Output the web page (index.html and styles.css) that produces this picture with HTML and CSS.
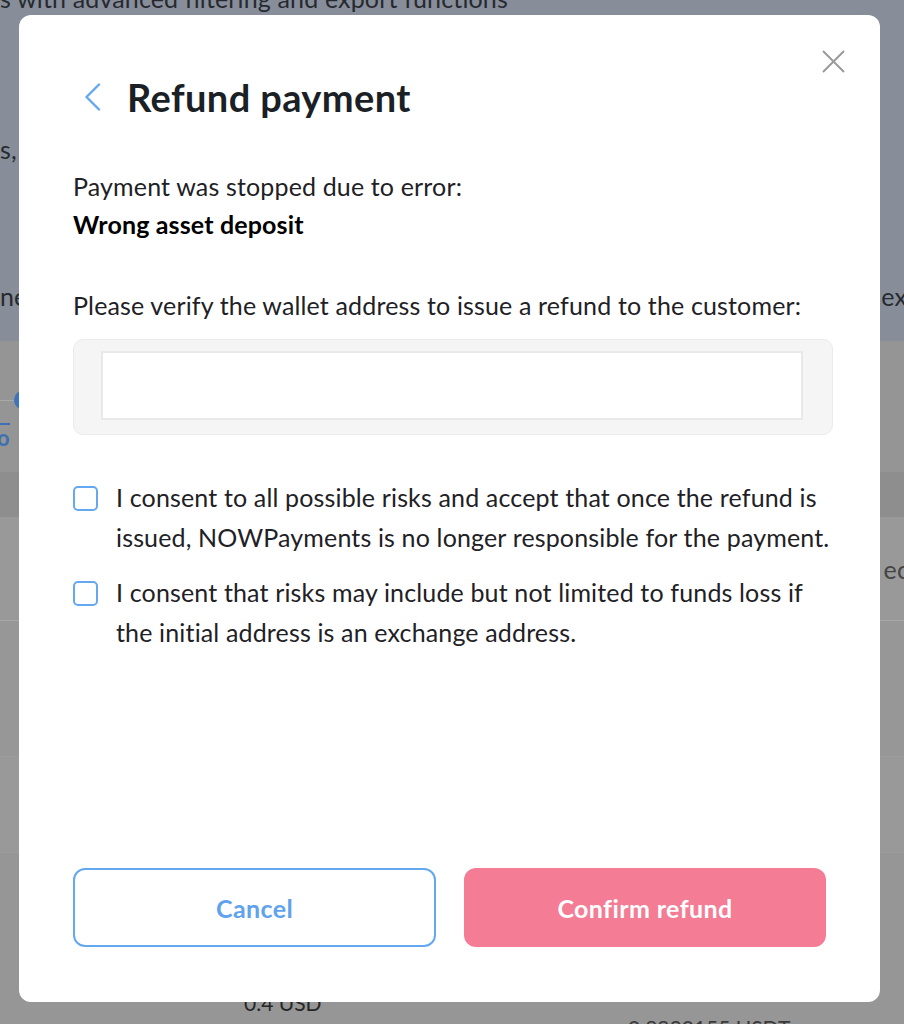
FILE: index.html
```html
<!DOCTYPE html>
<html lang="en">
<head>
<meta charset="utf-8">
<title>Refund payment</title>
<link rel="stylesheet" href="styles.css">
</head>
<body>
<div class="page">
  <div class="hero">
    <p class="hero-line hero-first">s with advanced filtering and export functions</p>
    <p class="hero-line hero-second">s,</p>
    <div class="hero-line hero-split"><span>ne</span><span>ex</span></div>
  </div>
  <div class="toolbar">
    <div class="toggle"><span class="toggle-line"></span><span class="toggle-dot"></span></div>
    <span class="toolbar-dash"></span>
    <span class="toolbar-o">o</span>
  </div>
  <div class="thead"></div>
  <div class="trow trow-a"><span></span><span class="cell-right">ec</span></div>
  <div class="trow trow-b"></div>
  <div class="trow trow-c"></div>
  <div class="trow trow-d"><span></span><span class="cell">0.4 USD</span><span class="cell cell-low">0.8830155 USDT</span></div>
</div>

<div class="modal" role="dialog" aria-labelledby="modal-title">
  <button class="close" type="button" aria-label="Close">
    <svg width="23" height="23" viewBox="0 0 23 23"><path d="M1 1 L22 22 M22 1 L1 22" stroke="#9a9a9a" stroke-width="2" fill="none"/></svg>
  </button>
  <div class="head">
    <span class="back">
      <svg width="18" height="28" viewBox="0 0 18 28"><path d="M16 1.5 L3.5 14 L16 26.5" stroke="#64a8f0" stroke-width="2.4" fill="none" stroke-linecap="round" stroke-linejoin="round"/></svg>
    </span>
    <h1 class="title" id="modal-title">Refund payment</h1>
  </div>
  <p class="msg">Payment was stopped due to error:<strong>Wrong asset deposit</strong></p>
  <p class="label">Please verify the wallet address to issue a refund to the customer:</p>
  <div class="field"><div class="input"></div></div>
  <div class="checks">
    <label class="check"><span class="box"></span><span class="check-text">I consent to all possible risks and accept that once the refund is<br>issued, NOWPayments is no longer responsible for the payment.</span></label>
    <label class="check"><span class="box"></span><span class="check-text">I consent that risks may include but not limited to funds loss if<br>the initial address is an exchange address.</span></label>
  </div>
  <div class="actions">
    <button class="btn btn-cancel" type="button">Cancel</button>
    <button class="btn btn-confirm" type="button">Confirm refund</button>
  </div>
</div>
</body>
</html>
```
FILE: styles.css
```css
html, body {
  margin: 0;
  padding: 0;
}
body {
  font-family: Lato, "Noto Sans", sans-serif;
  background: #969696;
  overflow: hidden;
  color: #1e2125;
}
.page {
  height: 1024px;
  overflow: hidden;
  display: flex;
  flex-direction: column;
}
.hero {
  flex: 0 0 341px;
  background: #878e99;
  display: flex;
  flex-direction: column;
  color: #262a30;
  font-size: 25px;
  letter-spacing: 0.15px;
}
.hero-line {
  margin: 0;
  line-height: 26px;
  white-space: nowrap;
}
.hero-first { margin-top: -15px; }
.hero-second { margin-top: 125px; }
.hero-split {
  margin-top: 121px;
  display: flex;
  justify-content: space-between;
  margin-right: -3px;
}
.toolbar {
  flex: 0 0 131px;
  background: #959595;
  display: flex;
  flex-direction: column;
  align-items: flex-start;
}
.toggle {
  margin-top: 49px;
  display: flex;
  align-items: center;
  height: 20px;
}
.toggle-line {
  width: 14px;
  height: 1px;
  background: #a9a9a9;
}
.toggle-dot {
  width: 20px;
  height: 20px;
  border-radius: 50%;
  background: #3f74bd;
}
.toolbar-dash {
  margin-top: 13px;
  width: 10px;
  height: 2px;
  background: #3f70b3;
}
.toolbar-o {
  margin-top: 3px;
  margin-left: -3px;
  color: #3f70b3;
  font-weight: 700;
  font-size: 22px;
  line-height: 20px;
}
.thead {
  flex: 0 0 45px;
  background: #8e8e8e;
}
.trow {
  display: grid;
  grid-template-columns: 244px 384px 1fr;
  align-items: center;
  border-bottom: 1px solid #a6a6a6;
  color: #262626;
  font-size: 25px;
  letter-spacing: 0.15px;
}
.trow-a {
  flex: 0 0 103px;
  background: #999;
  grid-template-columns: 1fr auto;
}
.cell-right { margin-right: -5px; color: #444; }
.trow-b { flex: 0 0 135px; background: #979797; border-bottom-color: #9c9c9c; }
.trow-c { flex: 0 0 95px; background: #999; border-bottom-color: #9c9c9c; }
.trow-d {
  flex: 1 1 auto;
  background: #969696;
  border-bottom: 0;
  align-items: start;
}
.cell {
  padding-top: 137px;
  font-size: 21px;
  line-height: 26px;
  letter-spacing: 0;
}
.cell-low { padding-top: 162px; color: #3a3a3a; }

/* modal */
.modal {
  position: fixed;
  left: 19px;
  top: 15px;
  width: 861px;
  height: 987px;
  box-sizing: border-box;
  padding: 58px 47px 55px 54px;
  background: #fff;
  border-radius: 12px;
  display: flex;
  flex-direction: column;
}
.close {
  position: absolute;
  top: 35px;
  right: 35px;
  width: 23px;
  height: 23px;
  padding: 0;
  border: 0;
  background: none;
  display: flex;
}
.head {
  display: flex;
  align-items: center;
  height: 48px;
}
.back {
  flex: 0 0 54px;
  display: flex;
  align-items: center;
  padding-left: 10px;
  box-sizing: border-box;
}
.title {
  margin: 0;
  font-size: 38px;
  font-weight: 700;
  letter-spacing: 0.4px;
  color: #1b1f26;
  line-height: 48px;
}
.msg, .label {
  margin: 0;
  font-size: 25px;
  letter-spacing: 0.15px;
  line-height: 38px;
  color: #1e2125;
}
.msg { margin-top: 46px; }
.msg strong {
  display: block;
  font-weight: 700;
  color: #000;
}
.label { margin-top: 43px; }
.field {
  margin-top: 15px;
  height: 96px;
  box-sizing: border-box;
  background: #f5f5f5;
  border: 1px solid #ebebeb;
  border-radius: 10px;
  padding: 11px 29px 14px 27px;
}
.input {
  height: 100%;
  box-sizing: border-box;
  background: #fff;
  border: 2px solid #e9e9e9;
}
.checks {
  margin-top: 42px;
  display: flex;
  flex-direction: column;
  gap: 15px;
}
.check {
  display: flex;
  align-items: flex-start;
  gap: 18px;
}
.box {
  flex: 0 0 25px;
  height: 25px;
  box-sizing: border-box;
  margin-top: 9px;
  border: 2px solid #64a8f0;
  border-radius: 5px;
}
.check-text {
  font-size: 25px;
  letter-spacing: 0.15px;
  line-height: 40px;
  white-space: nowrap;
  color: #1e2125;
}
.actions {
  margin-top: auto;
  display: flex;
  gap: 28px;
}
.btn {
  height: 79px;
  box-sizing: border-box;
  border-radius: 12px;
  font-family: inherit;
  font-size: 25px;
  font-weight: 700;
  letter-spacing: 0.4px;
  cursor: pointer;
}
.btn-cancel {
  flex: 0 0 363px;
  background: #fff;
  border: 2px solid #64a8f0;
  color: #5fa3ee;
}
.btn-confirm {
  flex: 0 0 362px;
  background: #f47c94;
  border: 0;
  color: #fff;
}
```
